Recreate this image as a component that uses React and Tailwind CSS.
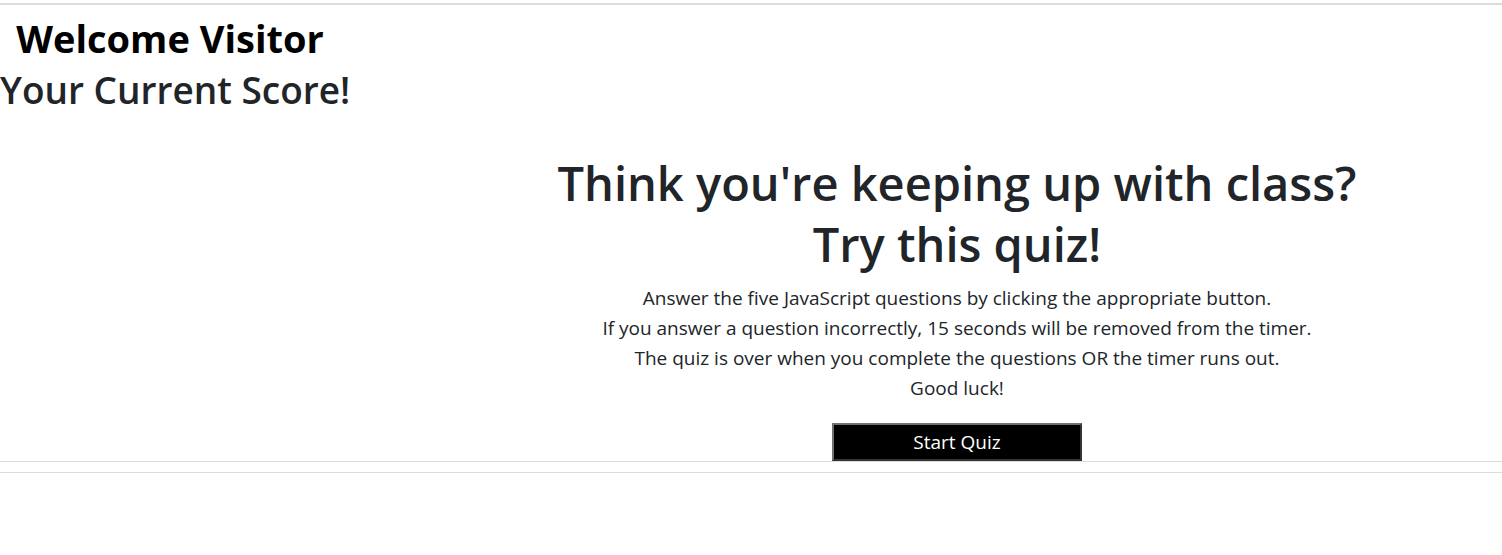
// App.jsx - quiz landing page
const font = { fontFamily: '"Open Sans", "Noto Sans", sans-serif' };

const App = () => {
  return (
    <div className="min-h-[555px] bg-white text-[#212529]" style={font}>
      <div className="pt-[3px]">
        <hr className="border-0 border-t-2 border-[#dcdcdc]" />
      </div>

      {/* Visitor / score column */}
      <div className="w-[348px] text-center">
        <h2 className="mt-[9px] pr-[8px] text-[38px] leading-[48px] font-bold text-black">
          Welcome Visitor
        </h2>
        <h3 className="mt-[4px] text-[37px] leading-[48px] font-semibold whitespace-nowrap">
          Your Current Score!
        </h3>
      </div>

      {/* Intro */}
      <div className="ml-[412px] text-center">
        <h1 className="mt-[39px] text-[47px] leading-[61px] font-semibold">
          Think you're keeping up with class?
          <br />
          Try this quiz!
        </h1>
        <div className="mt-[8px] text-[19px] leading-[30px]">
          <p>Answer the five JavaScript questions by clicking the appropriate button.</p>
          <p>If you answer a question incorrectly, 15 seconds will be removed from the timer.</p>
          <p>The quiz is over when you complete the questions OR the timer runs out.</p>
          <p>Good luck!</p>
        </div>
        <button className="mt-[20px] w-[250px] h-[38px] bg-black text-white text-[19px] border-2 border-t-[#707070] border-l-[#707070] border-b-[#333] border-r-[#333]">
          Start Quiz
        </button>
      </div>

      <hr className="border-0 border-t border-[#dcdcdc]" />
      <hr className="mt-[10px] border-0 border-t border-[#dcdcdc]" />
    </div>
  );
};

export default App;
